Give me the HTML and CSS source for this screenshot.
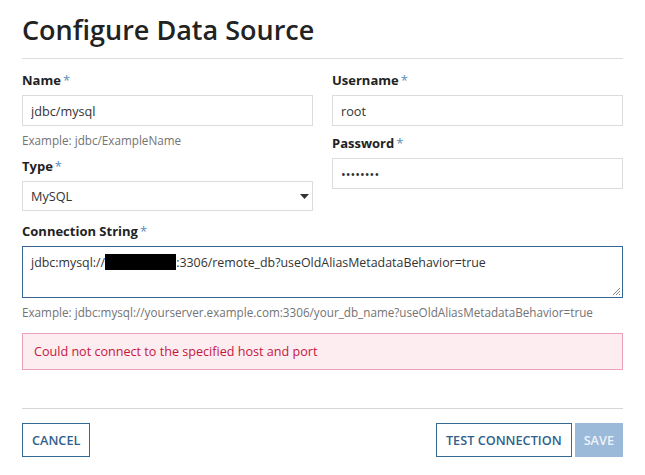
FILE: index.html
```html
<!DOCTYPE html>
<html lang="en">
<head>
<meta charset="utf-8">
<title>Configure Data Source</title>
<link rel="stylesheet" href="styles.css">
</head>
<body>
<div class="dialog">
  <h1 class="dialog-title">Configure Data Source</h1>

  <form class="ds-form">
    <div class="cols">
      <div class="col">
        <div class="field">
          <label>Name<span class="req">*</span></label>
          <input class="txt" type="text" value="jdbc/mysql">
          <p class="hint">Example: jdbc/ExampleName</p>
        </div>
        <div class="field">
          <label>Type<span class="req">*</span></label>
          <div class="select">
            <span>MySQL</span>
            <svg width="9" height="5" viewBox="0 0 9 5"><path d="M0 0h9L4.5 5z" fill="#333"/></svg>
          </div>
        </div>
      </div>
      <div class="col">
        <div class="field">
          <label>Username<span class="req">*</span></label>
          <input class="txt" type="text" value="root">
        </div>
        <div class="field">
          <label>Password<span class="req">*</span></label>
          <input class="txt pwd" type="text" value="••••••••">
        </div>
      </div>
    </div>

    <div class="field wide">
      <label>Connection String<span class="req">*</span></label>
      <div class="textarea">jdbc:mysql://<span class="redacted"></span>:3306/remote_db?useOldAliasMetadataBehavior=true
        <svg class="grip" width="8" height="8" viewBox="0 0 8 8"><path d="M8 1L1 8M8 4L4 8M8 7L7 8" stroke="#888" stroke-width="1"/></svg>
      </div>
      <p class="hint">Example: jdbc:mysql://yourserver.example.com:3306/your_db_name?useOldAliasMetadataBehavior=true</p>
    </div>

    <div class="alert">Could not connect to the specified host and port</div>

    <div class="actions">
      <button type="button" class="btn">Cancel</button>
      <div class="right">
        <button type="button" class="btn">Test Connection</button>
        <button type="button" class="btn btn-primary" disabled>Save</button>
      </div>
    </div>
  </form>
</div>
</body>
</html>
```

FILE: styles.css
```css
body{margin:0;background:#fff;font-family:"Open Sans","Liberation Sans",Arial,sans-serif;font-size:13px;color:#333;}
p{margin:0;}

.dialog{padding:0 22px;}
.dialog-title{margin:12px 0 0;padding-bottom:10px;border-bottom:1px solid #ddd;font-size:27px;line-height:36px;font-weight:600;color:#222;}

.ds-form{padding-top:12px;}
.cols{display:grid;grid-template-columns:1fr 1fr;column-gap:19px;}
.col{display:flex;flex-direction:column;gap:8px;}

.field label{display:block;font-weight:700;line-height:18px;color:#222;margin-bottom:6px;}
.field .req{color:#5a8cbc;font-weight:400;margin-left:2px;}

.txt{display:block;box-sizing:border-box;width:100%;height:31px;margin:0;padding:0 8px;border:1px solid #dcdcdc;font:inherit;font-size:12.7px;color:#333;background:#fff;outline:none;}

.hint{margin-top:6px;margin-bottom:1px;font-size:11.7px;line-height:16px;color:#737373;}

.select{box-sizing:border-box;height:30px;padding:0 3px 0 8px;border:1px solid #dcdcdc;display:flex;align-items:center;justify-content:space-between;font-size:12.7px;}

.wide{margin-top:11px;}
.textarea{position:relative;box-sizing:border-box;height:52px;padding:6px 8px;border:1px solid #36658f;font-size:12.4px;line-height:20px;color:#333;}
.redacted{display:inline-block;width:71px;height:16px;background:#000;vertical-align:-3px;}
.grip{position:absolute;right:2px;bottom:2px;}

.alert{margin-top:13px;box-sizing:border-box;height:37px;padding:0 11px;display:flex;align-items:center;background:#fdedf0;border:1px solid #e9a2b8;color:#c4163f;font-size:12.6px;}

.actions{margin-top:38px;padding-top:14px;border-top:1px solid #d6d6d6;display:flex;justify-content:space-between;}
.actions .right{display:flex;gap:3px;}
.btn{box-sizing:border-box;height:34px;padding:0 9px;margin:0;background:#fff;border:1px solid #336a96;color:#2f5f8c;font:600 12.7px "Open Sans","Liberation Sans",Arial,sans-serif;text-transform:uppercase;cursor:pointer;}
.btn-primary{padding:0 8px;background:#9bb9d9;border-color:#9bb9d9;color:#eef3f9;}
```
